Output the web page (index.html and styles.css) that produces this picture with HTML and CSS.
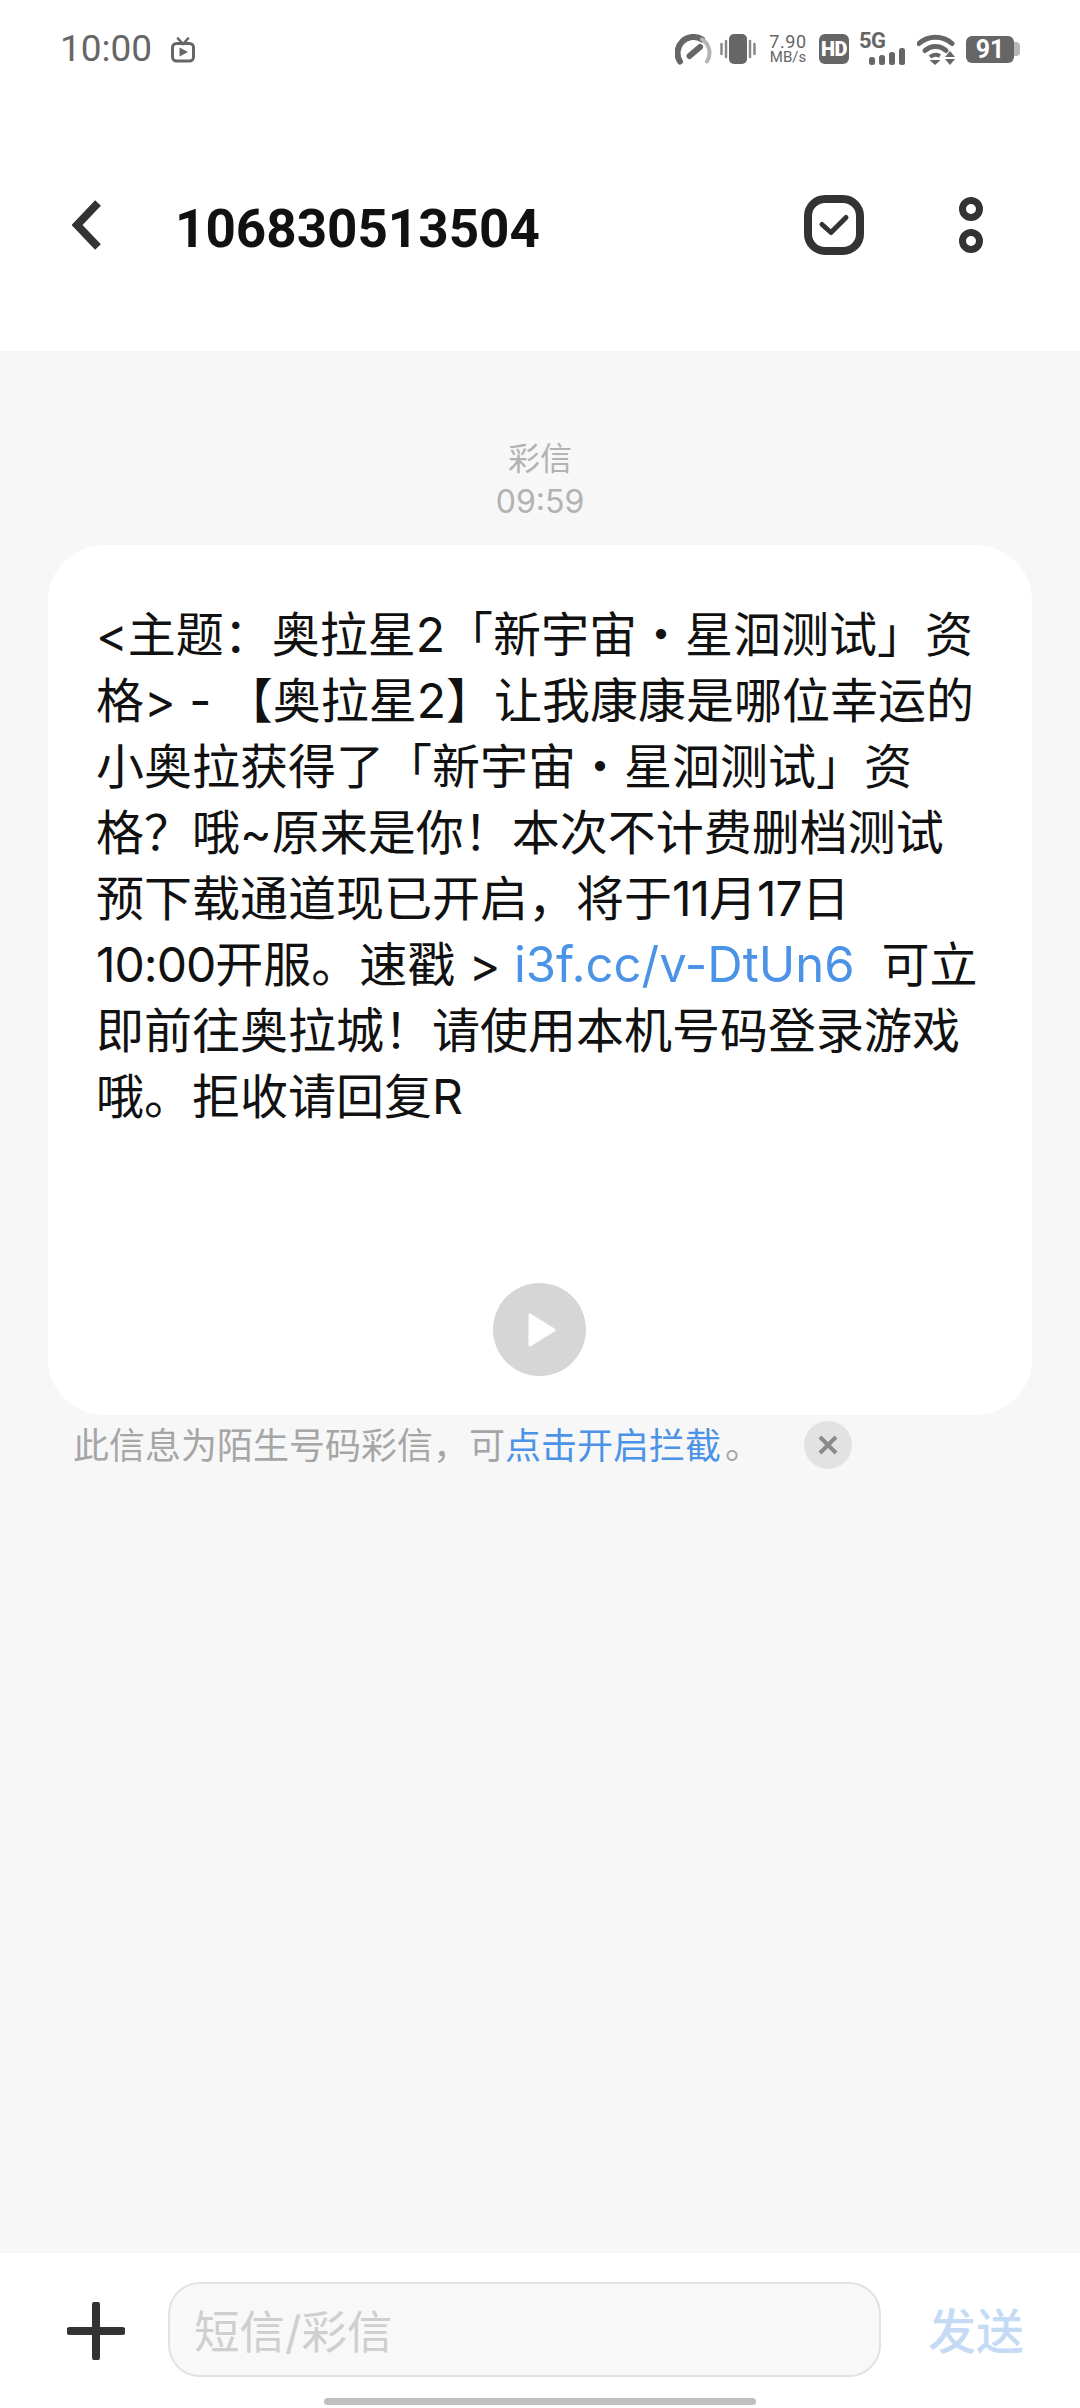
FILE: index.html
```html
<!DOCTYPE html>
<html lang="zh-CN">
<head>
<meta charset="utf-8">
<title>106830513504</title>
<link rel="stylesheet" href="styles.css">
</head>
<body>
<div class="screen">
  <header class="top">
    <div class="status">
      <div class="status-left">
        <span class="clock">10:00</span>
        <svg class="tv" width="24" height="26" viewBox="0 0 24 26"><path d="M7 1.500L12 7M17 1.500L12 7" stroke="#666" stroke-width="2.600" fill="none" stroke-linecap="round"/><rect x="1.500" y="6.500" width="21" height="17.500" rx="4" fill="none" stroke="#666" stroke-width="3"/><path d="M8.500 10.500L17 15L8.500 19.500Z" fill="#666"/></svg>
      </div>
      <div class="status-right">
        <svg class="st-gauge" width="37" height="31" viewBox="0 0 37 31"><path d="M5 27.500A16 16 0 0 1 27 5.400" fill="none" stroke="#666" stroke-width="6" stroke-linecap="round"/><path d="M27 5.400A16 16 0 0 1 32 27.500" fill="none" stroke="#b5b5b5" stroke-width="4" stroke-linecap="round"/><path d="M14.500 22L25 13" stroke="#666" stroke-width="6" stroke-linecap="round"/></svg>
        <svg class="st-vib" width="36" height="30" viewBox="0 0 36 30"><rect x="9" y="0" width="18" height="30" rx="5" fill="#666"/><path d="M1.500 10V20M34.500 10V20" stroke="#888" stroke-width="2.500" stroke-linecap="round"/><path d="M6 7V23M30 7V23" stroke="#888" stroke-width="2.500" stroke-linecap="round"/></svg>
        <div class="speed"><span class="speed-n">7.90</span><span class="speed-u">MB/s</span></div>
        <span class="hd">HD</span>
        <div class="signal">
          <span class="fiveg">5G</span>
          <svg class="bars" width="36" height="17" viewBox="0 0 36 17"><rect x="0" y="9" width="6" height="8" rx="2.500" fill="#666"/><rect x="10" y="7" width="6" height="10" rx="2.500" fill="#666"/><rect x="20" y="4" width="6" height="13" rx="2.500" fill="#666"/><rect x="30" y="0" width="6" height="17" rx="2.500" fill="#666"/></svg>
        </div>
        <svg class="st-wifi" width="38" height="31" viewBox="0 0 38 31"><path d="M2 9.500C11 1 26 1 35 9.500" fill="none" stroke="#666" stroke-width="5" stroke-linecap="round"/><path d="M8 16.500C14 11 23 11 29 16.500" fill="none" stroke="#666" stroke-width="5" stroke-linecap="round"/><path d="M13 23C16 20.500 20 20.500 23 22" fill="none" stroke="#666" stroke-width="4"/><path d="M12.500 26H23.500L18 31Z" fill="#666"/><path d="M33 17L38 23H28Z" fill="#666"/><path d="M28 25H38L33 31Z" fill="#666"/></svg>
        <div class="battery"><span class="batt-body">91</span><span class="batt-cap"></span></div>
      </div>
    </div>
    <nav class="nav">
      <svg class="back" width="30" height="50" viewBox="0 0 30 50"><path d="M26 3L5 25L26 47" fill="none" stroke="#333" stroke-width="8"/></svg>
      <h1 class="title">106830513504</h1>
      <svg class="check" width="60" height="60" viewBox="0 0 60 60"><rect x="4" y="4" width="52" height="52" rx="17" fill="none" stroke="#333" stroke-width="8"/><path d="M18 29.500L27 37.500L42 22.500" fill="none" stroke="#333" stroke-width="5" stroke-linecap="round" stroke-linejoin="round"/></svg>
      <svg class="more" width="24" height="56" viewBox="0 0 24 56"><circle cx="12" cy="12" r="8.500" fill="none" stroke="#333" stroke-width="7"/><circle cx="12" cy="44" r="8.500" fill="none" stroke="#333" stroke-width="7"/></svg>
    </nav>
  </header>

  <main class="thread">
    <div class="stamp">彩信<br><span class="stamp-time">09:59</span></div>
    <article class="bubble">
      <p class="msg">&lt;主题：奥拉星2「新宇宙・星洄测试」资<br>格&gt; - 【奥拉星2】让我康康是哪位幸运的<br>小奥拉获得了「新宇宙・星洄测试」资<br>格？哦~原来是你！本次不计费删档测试<br>预下载通道现已开启，将于<span class="num">11</span>月<span class="num">17</span>日<br><span class="num">10:00</span>开服。速戳 &gt; <a class="link">i3f.cc/v-DtUn6</a>&nbsp; 可立<br>即前往奥拉城！请使用本机号码登录游戏<br>哦。拒收请回复R</p>
      <div class="play"><svg width="30" height="36" viewBox="0 0 30 36"><path d="M3 3L27 18L3 33Z" fill="#fff" stroke="#fff" stroke-width="3" stroke-linejoin="round"/></svg></div>
    </article>
    <div class="notice">
      <span class="notice-text">此信息为陌生号码彩信，可<span class="notice-link">点击开启拦截</span><span class="notice-end">。</span></span>
      <span class="close"><svg width="22" height="22" viewBox="0 0 22 22"><path d="M3 3L19 19M19 3L3 19" stroke="#8a8a8a" stroke-width="4"/></svg></span>
    </div>
  </main>

  <footer class="composer">
    <div class="composer-row">
      <svg class="plus" width="58" height="58" viewBox="0 0 58 58"><path d="M29 3V55M3 29H55" stroke="#333" stroke-width="8" stroke-linecap="round"/></svg>
      <div class="input">短信/彩信</div>
      <span class="send">发送</span>
    </div>
    <div class="home-bar"></div>
  </footer>
</div>
</body>
</html>
```
FILE: styles.css
```css
* { box-sizing: border-box; }
html, body { margin: 0; padding: 0; }
body {
  width: 1080px;
  height: 2408px;
  overflow: hidden;
  font-family: Inter, "Noto Sans CJK SC", sans-serif;
}
.screen {
  width: 1080px;
  height: 2408px;
  display: flex;
  flex-direction: column;
  background: #f7f7f7;
}
.top { background: #fff; height: 351px; }
.status {
  height: 100px;
  display: flex;
  align-items: center;
  justify-content: space-between;
  padding: 0 60px 2px 60px;
}
.status-left { display: flex; align-items: center; gap: 19px; }
.clock { font-family: Roboto, sans-serif; font-size: 37px; color: #666; line-height: 44px; }
.tv { margin-top: 2px; }
.status-right { display: flex; align-items: center; }
.st-gauge { margin-right: 8px; }
.st-vib { margin-right: 12px; }
.speed { font-family: Roboto, sans-serif; display: flex; flex-direction: column; width: 40px; margin-right: 11px; align-items: center; color: #666; }
.speed-n { font-size: 18px; line-height: 17px; letter-spacing: 0.6px; }
.speed-u { font-size: 15px; line-height: 15px; }
.hd {
  font-family: Roboto, sans-serif;
  width: 30px; height: 30px; border-radius: 6px; background: #666; color: #fff;
  font-size: 20px; font-weight: 900; line-height: 30px; text-align: center; letter-spacing: -0.5px;
  margin-right: 10px;
}
.signal { position: relative; width: 46px; height: 32px; margin-right: 12px; }
.fiveg { font-family: Roboto, sans-serif; position: absolute; left: 0; top: -4px; font-size: 22px; font-weight: 700; line-height: 24px; color: #666; letter-spacing: -0.5px; }
.bars { position: absolute; left: 10px; bottom: 0; }
.st-wifi { margin-right: 11px; }
.battery { display: flex; align-items: center; }
.batt-body {
  font-family: Roboto, sans-serif;
  width: 48px; height: 27px; border-radius: 6px; background: #666; color: #fff;
  font-size: 25px; font-weight: 700; line-height: 27px; text-align: center;
}
.batt-cap { width: 6px; height: 14px; background: #b8b8b8; border-radius: 0 4px 4px 0; }

.nav { height: 251px; display: flex; align-items: center; padding: 0 97px 2px 72px; }
.back { flex: none; }
.title { font-family: Roboto, sans-serif; margin: 8px 0 0 73px; flex: 1; font-size: 53px; font-weight: 700; color: #111; line-height: 60px; }
.check { flex: none; margin-right: 95px; }
.more { flex: none; }

.thread { flex: 1; padding: 86px 48px 0; }
.stamp { text-align: center; font-size: 32px; line-height: 43px; color: #b2b2b2; margin-bottom: 22px; }
.bubble {
  background: #fff;
  height: 870px;
  border-radius: 56px;
  padding: 57px 48px 0 48px;
  display: flex;
  flex-direction: column;
}
.msg { margin: 0; font-size: 48px; line-height: 66px; color: #111; white-space: nowrap; }
.num { letter-spacing: -1px; }
.link { color: #4b93e6; font-size: 49px; }
.play {
  width: 93px; height: 93px; border-radius: 50%; background: #d6d6d6;
  align-self: center; margin-top: 153px; margin-left: -1px;
  display: flex; align-items: center; justify-content: center; padding-left: 4px;
}
.notice { display: flex; align-items: center; padding: 4px 0 0 25px; }
.notice-text { font-size: 36px; line-height: 48px; color: #a6a6a6; white-space: nowrap; width: 731px; padding-top: 3px; }
.notice-link { color: #4b93e6; }
.notice-end { margin-left: 4px; }
.close {
  width: 48px; height: 48px; border-radius: 50%; background: #e2e2e2;
  display: flex; align-items: center; justify-content: center;
}

.composer { background: #fff; height: 155px; padding-top: 29px; }
.composer-row { display: flex; align-items: center; padding-left: 67px; height: 95px; }
.plus { flex: none; margin-top: 3px; }
.input {
  width: 713px; height: 95px; margin-left: 43px;
  background: #f8f8f8; border: 2px solid #e2e2e2; border-radius: 32px;
  padding-left: 24px; font-size: 45.500px; line-height: 97px; color: #cfcfcf;
}
.send { margin-left: 47px; margin-top: 4px; font-size: 48px; font-weight: 500; line-height: 60px; color: #c5dbf5; }
.home-bar { width: 432px; height: 7px; border-radius: 4px; background: #bfbfbf; margin: 21px auto 0; }
```
